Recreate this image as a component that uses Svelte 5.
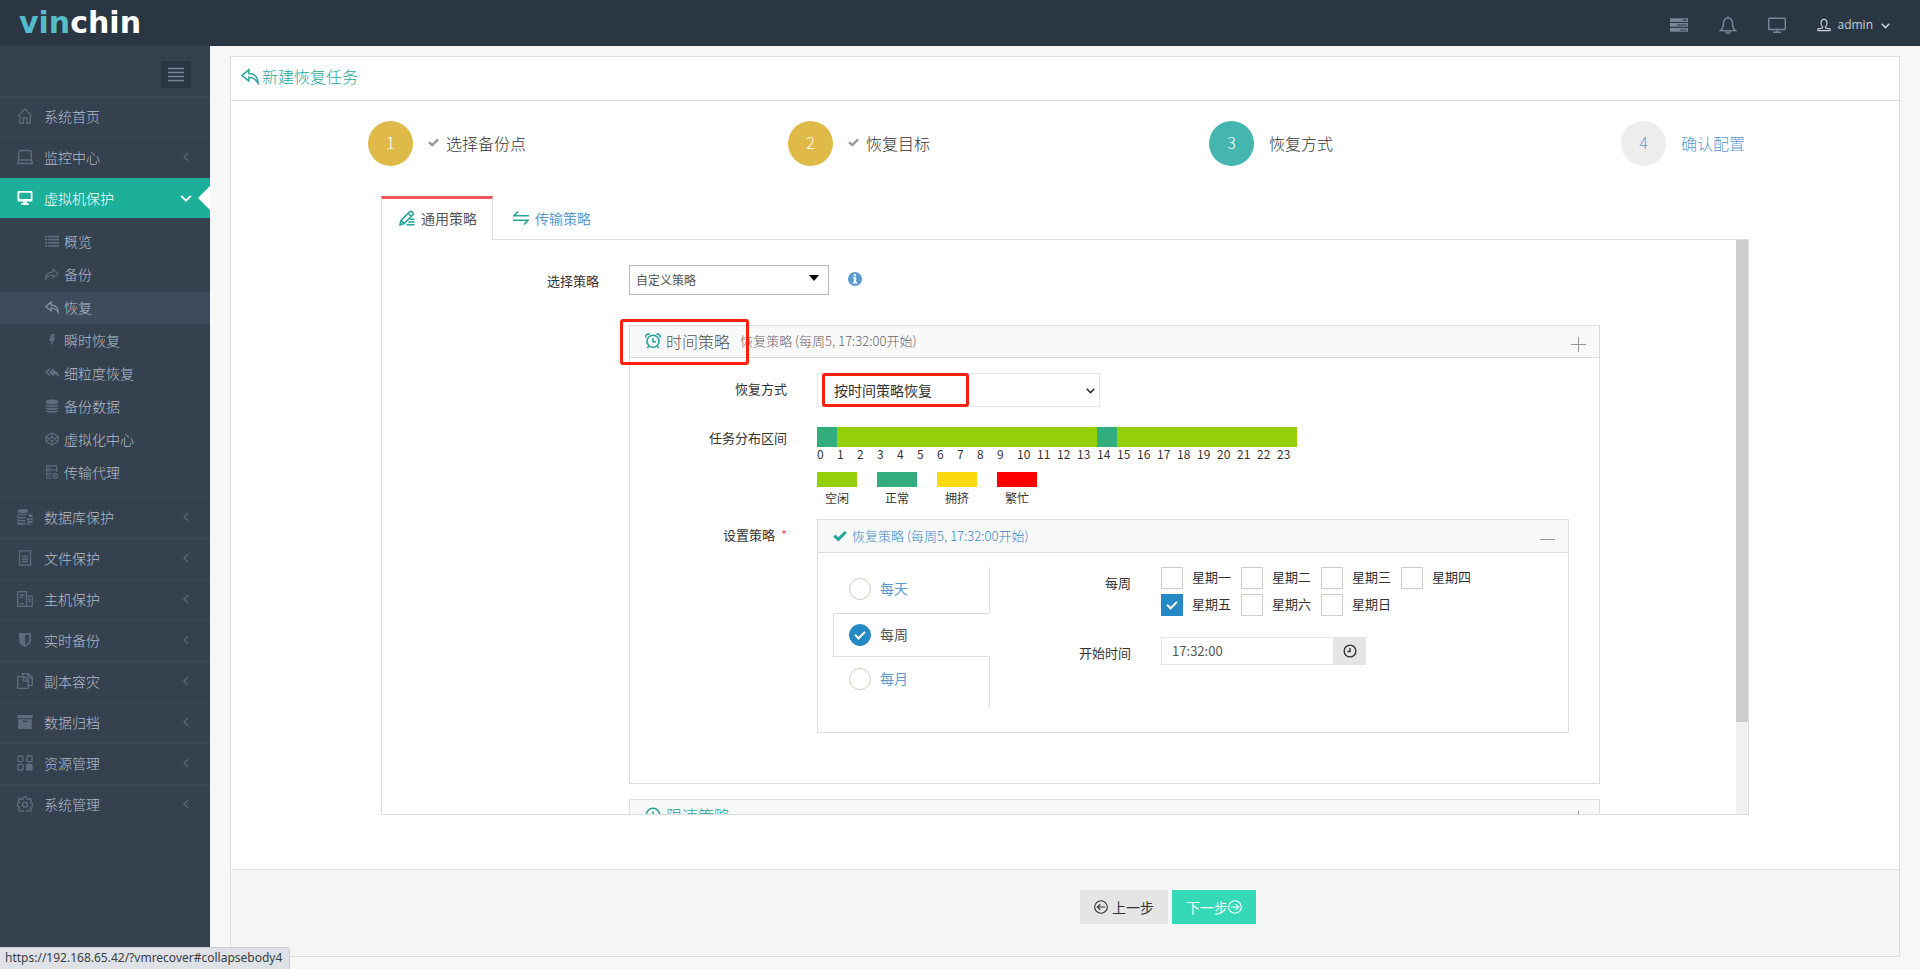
<script lang="ts">
  type IconDef = { d?: string; f?: string };

  // d is stroked, f is filled, both on a 16x16 grid
  const icons: Record<string, IconDef> = {
    home: { d: 'M.8 8.4 8 .9l7.200 7.500M2.900 8.300v7.100h3.300V10h3.600v5.400h3.300V8.300' },
    laptop: { d: 'M3.200 1.500h9.600a1.500 1.500 0 0 1 1.500 1.500v8H1.700V3a1.500 1.500 0 0 1 1.500-1.500zM1.700 11 .7 13.500v1h14.600v-1L14.300 11' },
    desktop: {
      f: 'M.5 2.200Q.5 1 1.700 1h12.600q1.200 0 1.200 1.200v8.100q0 1.200-1.200 1.200H9.800v1.800h2V15H4.200v-1.700h2v-1.800H1.700q-1.200 0-1.200-1.200zM2.300 2.700v6.400h11.400V2.700z',
    },
    list: { f: 'M0 2h2.500v2H0zM3.700 2H16v2H3.700zM0 5.500h2.500v2H0zM3.700 5.500H16v2H3.700zM0 9h2.500v2H0zM3.700 9H16v2H3.700zM0 12.500h2.500v2H0zM3.700 12.500H16v2H3.700z' },
    share: { d: 'M.8 13.500C1 8.500 4 5.800 9 5.500V2.300l6.200 5.200L9 12.300V9.200C5.500 9 3 10.200.8 13.500z' },
    reply: { d: 'M15.200 14.300C15 9 12 6 7 5.800V2.300L.8 7.500 7 12.400V9.200c3.500 0 6 1.500 8.200 5.100z' },
    bolt: { f: 'M7 1h4.300L9.300 5.500h3L6 15.500l1.600-6.400H4.500z' },
    replyAll: { f: 'M5.500 2v2.200L2.700 7l2.800 2.800V12L0 7zM10 2v3c4 .4 6 3 6 8.500-1.500-2.800-3-4-6-4.200V12L4.500 7z' },
    database: {
      f: 'M8 .5c4 0 7 1 7 2.200v1.200c0 1.200-3 2.200-7 2.200s-7-1-7-2.200V2.700C1 1.500 4 .5 8 .5zM1 5.600c1.500 1.200 4 1.600 7 1.600s5.500-.4 7-1.600v1.600c0 1.200-3 2.200-7 2.200s-7-1-7-2.200zM1 8.900c1.500 1.200 4 1.600 7 1.600s5.500-.4 7-1.600v1.600c0 1.200-3 2.200-7 2.200s-7-1-7-2.200zM1 12.200c1.500 1.200 4 1.600 7 1.600s5.500-.4 7-1.600v1.400c0 1.200-3 2.200-7 2.200s-7-1-7-2.200z',
    },
    codepen: { d: 'M8 1 15 5.200v5.600L8 15 1 10.800V5.200zM8 1v4.400M8 10.600V15M1 5.200l7 5.400 7-5.400M1 10.800l7-5.400 7 5.400' },
    agent: { d: 'M7 14.800H2V1h11.500v7M2 5.500h11.500M2 10h6M4 3.300h2M4 7.700h2M4 12.300h2M9 11.300l1.600-1.500h2.300l1.600 1.500v2.200L12.900 15h-2.300L9 13.500zM10.800 12.400h2' },
    dbPair: {
      f: 'M5.800 0c3 0 5.300.9 5.300 2s-2.300 2.200-5.300 2.200S.5 3.200.5 2.100 2.800 0 5.800 0zM.5 3.700c1.500 1.300 3.500 1.500 5.300 1.500s3.800-.2 5.300-1.500v.9c-1 1.400-3 2-5.300 2S.5 5.900.5 4.700zM0 6.500c1.500 1.300 4 1.800 6.500 1.700l2.300-.3v1.200c-4 1.200-8.800.3-8.800-1.200zM0 9.700c2 1.300 5 1.600 8.800 1.200v1.400C4.500 13 0 12.500 0 11zM0 12.800c2 1.200 5 1.600 8.800 1.200v1.500C4.500 16.300 0 15.800 0 14.200zM12.500 5c2 .2 3.500.8 3.500 1.600s-2 1.700-4 1.700V5zM10 9.300c2.500.4 4.700 0 6-.9v1.300c0 1-3 2-6 1.600zM10 12.200c2.500.3 4.700 0 6-.9v1.200c0 1-3 1.900-6 1.600zM10 14.900c2.500.2 4.700 0 6-.8-.2 1.200-3 2-6 1.800z',
    },
    file: { d: 'M2.500.8h11v14.400h-11zM5 6.500h6M5 9h6M5 11.500h6' },
    servers: { d: 'M9.500 15.300H.7V.7h8.800V4M3 4h4.500M3 6.500h3M3 12.800h4M9.500 4v11.300h5.800V5.200H9.500M11 8h2.500M11 10.300h2.500' },
    shield: { f: 'M2 1h12v6.500c0 3.500-2.500 5.700-6 7.500-3.500-1.800-6-4-6-7.500zM8 2.700v10.400c2.800-1.500 4.300-3.200 4.300-5.600V2.700z' },
    copy: { d: 'M5.500 4V.7h6L15.300 4.500v7.800h-4M.7 3.700h6.500l4 4v7.600H.7zM6.500 3.700v4.500h4.500M10.800.9v3.900h4.400' },
    archive: { f: 'M.3 1h15.400v3.200H.3zM1.200 5.200h13.600V15H1.200zM5.700 6.600v1.300h4.600V6.600z' },
    grid: {
      d: 'M1.900 1H5a1 1 0 0 1 1 1v3.600a1 1 0 0 1-1 1H1.900a1 1 0 0 1-1-1V2a1 1 0 0 1 1-1zM11 1h3.100a1 1 0 0 1 1 1v3.600a1 1 0 0 1-1 1H11a1 1 0 0 1-1-1V2a1 1 0 0 1 1-1zM1.900 9.300H5a1 1 0 0 1 1 1V14a1 1 0 0 1-1 1H1.900a1 1 0 0 1-1-1v-3.700a1 1 0 0 1 1-1z',
      f: 'M10.500 8.700h3.700q1.500 0 1.500 1.500v3.900q0 1.500-1.500 1.500h-3.700q-1.500 0-1.500-1.500v-3.900q0-1.500 1.500-1.500z',
    },
    gear: {
      d: 'M6.800.8h2.400l.5 2 1.300.6 1.900-1.100 1.700 1.700-1.100 1.900.6 1.300 1.600.5v2.400l-1.600.5-.6 1.300 1.100 1.900-1.700 1.700-1.900-1.100-1.300.6-.5 1.600H6.800l-.5-1.600-1.300-.6-1.900 1.100-1.700-1.700 1.100-1.900-.6-1.300L.4 10.100V7.700l1.200-.5.6-1.300L1.400 4l1.700-1.700L5 3.400l1.300-.6zM8 6.200a2.500 2.500 0 1 0 0 5 2.500 2.500 0 0 0 0-5z',
    },
    left: { d: 'M10.500 3.500 5.500 8l5 4.500' },
    down: { d: 'M2.500 5.500 8 11l5.500-5.500' },
    tasks: { f: 'M0 2h16v3.300H0zM0 6.300h16v3.300H0zM0 10.700h16V14H0zM11 3.200v1h4v-1zM6 7.500v1h9v-1zM9 11.900v1h6v-1z' },
    bell: { d: 'M8 .5v1.300M1.300 13h13.400c-2-1.500-2.700-3-2.700-6.500 0-3-1.500-4.700-4-4.700S4 3.500 4 6.500c0 3.500-.7 5-2.700 6.500zM6.200 13.300c0 2.700 3.600 2.700 3.600 0' },
    screen: { d: 'M1.300 2h13.400q.7 0 .7.7v8.600q0 .7-.7.700H1.300q-.7 0-.7-.7V2.700q0-.7.7-.7zM8 12v2.200M4.500 14.400h7' },
    user: { d: 'M6.300 10.200C4 8 3.500 1.500 8 1.500s4 6.500 1.700 8.700v1.300l5.300 1v2H1v-2l5.300-1z' },
    edit: { d: 'M1 14.800 2 10.500 10.300 2q1.300-1.300 2.600-.2l.7.700q1.200 1.200 0 2.500l-8.400 8.600zM2.200 10.700l3 2.800M9 3.300l3.300 3.200M11 9.300h4.500M9.300 12h6.200M7.500 14.800h8' },
    exchange: { d: 'M5 1.500 1 5.700h15M0 10.300h15L11 14.500' },
    clockBell: { d: 'M8 2.300a6 6 0 1 0 0 12 6 6 0 0 0 0-12zM8 5v3.800h3M3.800 13 2.300 15M12.200 13l1.500 2M.8 4.500C.5 2 2.500.6 4.700 1.300M15.200 4.500c.3-2.500-1.700-3.900-3.900-3.200' },
    clock: { d: 'M8 1.300a6.700 6.700 0 1 0 0 13.400A6.700 6.700 0 0 0 8 1.300zM8 4.500V8.500H5' },
    check: { f: 'M.3 8.800 2.600 6.300 6 9.300 13.400 2.200 15.800 4.700 6.200 14.300z' },
    plus: { d: 'M8.500 1v15M1 8.500h15' },
    minus: { d: 'M1 8.500h15' },
    info: { f: 'M8 0a8 8 0 1 1 0 16A8 8 0 0 1 8 0zM6.500 2.500v2.300h2.700V2.500zM5.500 6v1.500h1.200v4H5.500V13h5v-1.500H9.300V6z' },
    circleLeft: { d: 'M8 .8a7.200 7.200 0 1 0 0 14.400A7.200 7.200 0 0 0 8 .8zM12.500 8H4M7.200 4.700 3.800 8l3.400 3.300' },
    circleRight: { d: 'M8 .8a7.200 7.200 0 1 0 0 14.400A7.200 7.200 0 0 0 8 .8zM3.500 8H12M8.800 4.700 12.200 8l-3.400 3.300' },
    lines: { d: 'M0 1.500h16M0 5.500h16M0 9.500h16M0 13.500h16' },
  };

  const topMenu = [
    { icon: 'home', label: '系统首页', arrow: false },
    { icon: 'laptop', label: '监控中心', arrow: true },
  ];
  const subMenu = [
    { icon: 'list', label: '概览' },
    { icon: 'share', label: '备份' },
    { icon: 'reply', label: '恢复' },
    { icon: 'bolt', label: '瞬时恢复' },
    { icon: 'replyAll', label: '细粒度恢复' },
    { icon: 'database', label: '备份数据' },
    { icon: 'codepen', label: '虚拟化中心' },
    { icon: 'agent', label: '传输代理' },
  ];
  const bottomMenu = [
    { icon: 'dbPair', label: '数据库保护' },
    { icon: 'file', label: '文件保护' },
    { icon: 'servers', label: '主机保护' },
    { icon: 'shield', label: '实时备份' },
    { icon: 'copy', label: '副本容灾' },
    { icon: 'archive', label: '数据归档' },
    { icon: 'grid', label: '资源管理' },
    { icon: 'gear', label: '系统管理' },
  ];
  const steps = [
    { label: '选择备份点', state: 'done' },
    { label: '恢复目标', state: 'done' },
    { label: '恢复方式', state: 'current' },
    { label: '确认配置', state: 'todo' },
  ];
  const legend = [
    { level: 'idle', label: '空闲' },
    { level: 'normal', label: '正常' },
    { level: 'crowded', label: '拥挤' },
    { level: 'busy', label: '繁忙' },
  ];

  const hours = Array.from({ length: 24 }, (_, i) => i);
  const normalHours = [0, 14];

  const cycles = ['每天', '每周', '每月'];
  let cycle = $state('每周');

  const weekdays = ['星期一', '星期二', '星期三', '星期四', '星期五', '星期六', '星期日'];
  let checkedDays = $state(['星期五']);
  let startTime = $state('17:32:00');

  const summary = '恢复策略 (每周5, 17:32:00开始)';
</script>

{#snippet icon(name: string, cls = '')}
  <svg class="icon {cls}" viewBox="0 0 16 16" aria-hidden="true">
    {#if icons[name].d}<path class="stroke" d={icons[name].d} />{/if}
    {#if icons[name].f}<path class="fill" d={icons[name].f} />{/if}
  </svg>
{/snippet}

<header class="topbar">
  <a class="logo" href="#home"><span>vin</span>chin</a>
  <nav class="top-nav">
    <button type="button" aria-label="任务">{@render icon('tasks', 'lg')}</button>
    <button type="button" aria-label="告警">{@render icon('bell', 'lg')}</button>
    <button type="button" aria-label="大屏">{@render icon('screen', 'lg')}</button>
    <button type="button" class="account">
      {@render icon('user', 'sm')}<span>admin</span>{@render icon('down', 'xs bold')}
    </button>
  </nav>
</header>

<div class="layout">
  <aside class="sidebar">
    <div class="toggle-row">
      <button type="button" class="toggler" aria-label="折叠菜单">{@render icon('lines')}</button>
    </div>
    <ul class="menu">
      {#each topMenu as item}
        <li>
          <a href="#{item.icon}">
            {@render icon(item.icon)}<span>{item.label}</span>
            {#if item.arrow}{@render icon('left', 'arrow')}{/if}
          </a>
        </li>
      {/each}
      <li class="active">
        <a href="#vm">{@render icon('desktop')}<span>虚拟机保护</span>{@render icon('down', 'arrow bold')}</a>
        <ul class="sub-menu">
          {#each subMenu as item}
            <li>
              <a href="#{item.icon}" class:selected={item.label === '恢复'}>
                {@render icon(item.icon, 'sm')}<span>{item.label}</span>
              </a>
            </li>
          {/each}
        </ul>
      </li>
      {#each bottomMenu as item}
        <li>
          <a href="#{item.icon}">
            {@render icon(item.icon)}<span>{item.label}</span>{@render icon('left', 'arrow')}
          </a>
        </li>
      {/each}
    </ul>
  </aside>

  <main>
    <section class="portlet">
      <h1>{@render icon('reply', 'lg')}新建恢复任务</h1>

      <div class="portlet-body">
        <ol class="steps">
          {#each steps as step, i}
            <li class={step.state}>
              <span class="number">{i + 1}</span>
              <span class="desc">
                {#if step.state === 'done'}{@render icon('check', 'xs')}{/if}{step.label}
              </span>
            </li>
          {/each}
        </ol>

        <div class="tabbable">
          <nav class="tabs">
            <a href="#general" class="on">{@render icon('edit')}通用策略</a>
            <a href="#transfer">{@render icon('exchange')}传输策略</a>
          </nav>

          <div class="pane">
            <div class="scroll">
              <div class="row">
                <label class="name" for="policy">选择策略</label>
                <div class="inline">
                  <div class="select policy">
                    <select id="policy"><option>自定义策略</option></select>
                    <i class="caret"></i>
                  </div>
                  {@render icon('info', 'sm blue')}
                </div>
              </div>

              <div class="row">
                <span></span>
                <div class="panels">
                  <section class="panel">
                    <header class="panel-head">
                      <h2>{@render icon('clockBell')}时间策略</h2>
                      <span class="summary">{summary}</span>
                      <button type="button" aria-label="展开">{@render icon('plus')}</button>
                      <div class="mark mark-title"></div>
                    </header>
                    <div class="panel-body">
                      <div class="field">
                        <label class="name" for="mode">恢复方式</label>
                        <div class="select mode">
                          <select id="mode"><option>按时间策略恢复</option></select>
                          {@render icon('down', 'xs bold')}
                          <div class="mark mark-mode"></div>
                        </div>
                      </div>

                      <div class="field">
                        <span class="name short">任务分布区间</span>
                        <div>
                          <div class="hours">
                            {#each hours as hour}
                              <div class="hour">
                                <i class={normalHours.includes(hour) ? 'normal' : 'idle'}></i>
                                <span>{hour}</span>
                              </div>
                            {/each}
                          </div>
                          <div class="legend">
                            {#each legend as item}
                              <div><i class={item.level}></i><span>{item.label}</span></div>
                            {/each}
                          </div>
                        </div>
                      </div>

                      <div class="field last">
                        <span class="name">设置策略<em>*</em></span>
                        <section class="panel">
                          <header class="panel-head inner">
                            <a href="#collapsebody4">{@render icon('check', 'sm')}{summary}</a>
                            <button type="button" aria-label="收起">{@render icon('minus')}</button>
                          </header>
                          <div class="schedule">
                            <div class="cycles">
                              {#each cycles as item}
                                <label class:on={cycle === item}>
                                  <input type="radio" name="cycle" value={item} bind:group={cycle} />
                                  <span>{item}</span>
                                </label>
                              {/each}
                              <div class="rest"></div>
                            </div>
                            <div class="settings">
                              <span class="name">每周</span>
                              <div class="days">
                                {#each weekdays as day}
                                  <label>
                                    <input type="checkbox" value={day} bind:group={checkedDays} />
                                    <span>{day}</span>
                                  </label>
                                {/each}
                              </div>
                              <label class="name" for="start">开始时间</label>
                              <div class="time">
                                <input id="start" type="text" bind:value={startTime} />
                                <button type="button" aria-label="选择时间">{@render icon('clock', 'sm')}</button>
                              </div>
                            </div>
                          </div>
                        </section>
                      </div>
                    </div>
                  </section>

                  <section class="panel">
                    <header class="panel-head">
                      <h2 class="link">{@render icon('clock')}限速策略</h2>
                      <button type="button" aria-label="展开">{@render icon('plus')}</button>
                    </header>
                  </section>
                </div>
              </div>
            </div>
            <div class="scrollbar"><div class="thumb"></div></div>
          </div>
        </div>
      </div>

      <footer class="actions">
        <button type="button" class="prev">{@render icon('circleLeft', 'sm')}<span>上一步</span></button>
        <button type="button" class="next"><span>下一步</span>{@render icon('circleRight', 'sm')}</button>
      </footer>
    </section>
  </main>
</div>

<div class="link-status">https://192.168.65.42/?vmrecover#collapsebody4</div>

<style>
  :global(body) {
    margin: 0;
    background: #f7f7f7;
  }
  :global(#app) {
    min-height: 100vh;
    display: flex;
    flex-direction: column;
    font: 13px/20px 'Noto Sans CJK SC', 'Open Sans', sans-serif;
    color: #333;
  }
  * {
    box-sizing: border-box;
  }
  ul,
  ol,
  h1,
  h2 {
    margin: 0;
    padding: 0;
    list-style: none;
    font-weight: 300;
  }
  a {
    color: #5b9bd1;
    text-decoration: none;
  }
  button,
  input,
  select {
    margin: 0;
    padding: 0;
    border: 0;
    background: none;
    font: inherit;
    color: inherit;
  }

  .icon {
    width: 16px;
    height: 16px;
    flex-shrink: 0;
    display: block;
  }
  .icon.lg {
    width: 18px;
    height: 18px;
  }
  .icon.sm {
    width: 14px;
    height: 14px;
  }
  .icon.xs {
    width: 11px;
    height: 11px;
  }
  .icon.blue {
    color: #5b9bd1;
  }
  .stroke {
    fill: none;
    stroke: currentColor;
    stroke-width: 1.3;
  }
  .bold .stroke {
    stroke-width: 2.2;
  }
  .fill {
    fill: currentColor;
    fill-rule: evenodd;
  }

  .topbar {
    height: 46px;
    padding: 0 29px 0 19px;
    display: flex;
    align-items: center;
    justify-content: space-between;
    background: #2b3643;
  }
  .logo {
    height: 44px;
    font: bold 30px/44px 'DejaVu Sans', sans-serif;
    color: #fff;
  }
  .logo span {
    color: #54bccb;
  }
  .top-nav {
    display: flex;
    align-items: center;
    gap: 31px;
    padding-top: 4px;
    color: #79869a;
  }
  .account {
    display: flex;
    align-items: center;
    gap: 6px;
    color: #c6cfda;
    font: 12px/18px 'Open Sans', sans-serif;
  }
  .account span {
    margin-right: 1px;
  }

  .layout {
    flex: 1;
    display: flex;
  }
  .sidebar {
    width: 210px;
    flex-shrink: 0;
    background: #364150;
  }
  .toggle-row {
    height: 50px;
    padding: 15px 19px 0;
    display: flex;
    justify-content: flex-end;
  }
  .toggler {
    width: 30px;
    height: 27px;
    display: grid;
    place-items: center;
    background: #2b3643;
    color: #79869a;
  }
  .menu > li > a {
    position: relative;
    height: 41px;
    padding: 0 17px 2px;
    display: flex;
    align-items: center;
    gap: 11px;
    border-top: 1px solid #3d4957;
    font-size: 14px;
    color: #b4bcc8;
  }
  .menu a .icon {
    color: #606c7d;
  }
  .menu a .arrow {
    width: 14px;
    height: 14px;
    margin-left: auto;
  }
  .menu > .active > a {
    height: 40px;
    background: #1caf9a;
    border-color: #1caf9a;
    color: #fff;
  }
  .menu > .active > a .icon {
    color: #fff;
  }
  .menu > .active > a::after {
    content: '';
    position: absolute;
    right: 0;
    top: 7px;
    border: 12px solid transparent;
    border-left: 0;
    border-right-color: #fff;
  }
  .sub-menu {
    padding: 8px 0 7px;
  }
  .sub-menu a {
    height: 32px;
    margin-bottom: 1px;
    padding: 0 0 2px 45px;
    display: flex;
    align-items: center;
    gap: 5px;
    font-size: 14px;
    color: #b4bcc8;
  }
  .sub-menu .selected {
    background: #3e4b5c;
  }
  .menu .selected .icon {
    color: #8e9bae;
  }

  main {
    flex: 1;
    min-width: 0;
    padding: 10px 20px 12px;
    display: flex;
  }
  .portlet {
    flex: 1;
    min-width: 0;
    display: flex;
    flex-direction: column;
    border: 1px solid #ddd;
    background: #fff;
  }
  h1 {
    height: 44px;
    padding: 0 10px 5px;
    display: flex;
    align-items: center;
    gap: 3px;
    border-bottom: 1px solid #ddd;
    font-size: 16px;
    color: #26a69a;
  }
  .portlet-body {
    flex: 1;
    padding: 20px 0;
  }
  .steps {
    padding: 0 10px;
    display: grid;
    grid-template-columns: repeat(4, 1fr);
  }
  .steps li {
    display: flex;
    align-items: center;
    justify-content: center;
    gap: 15px;
    font-size: 16px;
    font-weight: 300;
  }
  .number {
    width: 45px;
    height: 45px;
    border-radius: 50%;
    line-height: 43px;
    text-align: center;
    background: #ededed;
  }
  .desc {
    padding-bottom: 2px;
    display: flex;
    align-items: center;
    gap: 7px;
  }
  .desc .icon {
    color: #999;
  }
  .done .number {
    background: #dfba49;
    color: #fff;
  }
  .current .number {
    background: #45b6af;
    color: #fff;
  }
  .todo {
    color: #5b9bd1;
  }

  .tabbable {
    margin: 30px 9% 0;
  }
  .tabs {
    display: flex;
    gap: 2px;
  }
  .tabs a {
    height: 44px;
    margin-bottom: -1px;
    padding: 0 15px 3px 17px;
    display: flex;
    align-items: center;
    gap: 6px;
    border: 1px solid transparent;
    border-top-width: 3px;
    border-bottom: 0;
    font-size: 14px;
  }
  .tabs .on {
    z-index: 1;
    border-color: #f3565d #ddd;
    background: #fff;
    color: #555;
  }
  .tabs .icon {
    color: #26a69a;
  }
  .pane {
    height: 576px;
    display: flex;
    border: 1px solid #ddd;
  }
  .scroll {
    flex: 1;
    min-width: 0;
    overflow: hidden;
    padding: 25px 136px 0 0;
  }
  .scrollbar {
    width: 12px;
    background: #f1f1f1;
  }
  .thumb {
    height: 84%;
    background: #cdcdcd;
  }

  .row {
    display: grid;
    grid-template-columns: 217px 1fr;
    gap: 30px;
    margin-bottom: 28px;
  }
  .name {
    line-height: 32px;
    text-align: right;
  }
  .name.short {
    line-height: 21px;
  }
  .name em {
    margin-left: 6px;
    font-style: normal;
    color: #f3565d;
  }
  .inline {
    display: flex;
    gap: 19px;
    height: 32px;
  }
  .inline > .icon {
    margin-top: 7px;
  }
  .select {
    position: relative;
  }
  .select select {
    width: 100%;
    height: 100%;
    appearance: none;
  }
  .policy {
    width: 200px;
    height: 30px;
  }
  .policy select {
    padding: 0 6px;
    border: 1px solid #bbb;
    font-size: 12px;
    color: #555;
  }
  .caret {
    position: absolute;
    right: 10px;
    top: 10px;
    border: 5px solid transparent;
    border-top: 6px solid #000;
    border-bottom: 0;
  }
  .mode {
    width: 283px;
    height: 34px;
  }
  .mode select {
    padding: 0 16px 1px;
    border: 1px solid #e5e5e5;
    font-size: 14px;
  }
  .mode .icon {
    position: absolute;
    right: 4px;
    top: 12px;
  }

  .mark {
    position: absolute;
    z-index: 2;
    border: 3px solid #ff2010;
    border-radius: 3px;
    pointer-events: none;
  }
  .mark-title {
    left: -10px;
    top: -7px;
    width: 129px;
    height: 46px;
  }
  .mark-mode {
    left: 5px;
    top: 0;
    width: 147px;
    height: 34px;
  }

  .panels {
    display: grid;
    gap: 15px;
  }
  .panel {
    min-width: 0;
    border: 1px solid #ddd;
  }
  .panel-head {
    position: relative;
    height: 32px;
    padding: 0 13px 2px 15px;
    display: flex;
    align-items: center;
    gap: 10px;
    border-bottom: 1px solid #ddd;
    background: #f9f9f9;
  }
  .panel-head.inner {
    height: 33px;
    padding-bottom: 0;
  }
  .panel-head h2,
  .panel-head a {
    display: flex;
    align-items: center;
    gap: 5px;
  }
  .panel-head h2 {
    font-size: 16px;
    color: #555;
  }
  .panel-head h2.link,
  .panel-head .icon {
    color: #26a69a;
  }
  .panel-head a {
    font-weight: 300;
    color: #3a86c8;
  }
  .panel-head button {
    margin-left: auto;
    padding-top: 6px;
  }
  .panel-head button .stroke {
    stroke-width: 1;
  }
  .panel-head button .icon {
    color: #999;
  }
  .summary {
    font-weight: 300;
    color: #666;
  }
  .panel-body {
    padding: 15px 30px 50px 0;
  }
  .field {
    display: grid;
    grid-template-columns: 157px 1fr;
    gap: 30px;
    margin-bottom: 20px;
  }
  .field.last {
    margin: -10px 0 0;
  }
  .hours {
    display: flex;
    height: 45px;
    font-size: 12px;
  }
  .hour {
    width: 20px;
    line-height: 13px;
  }
  .hour i {
    display: block;
    height: 20px;
  }
  .idle {
    background: #94cf07;
  }
  .normal {
    background: #32ae7e;
  }
  .crowded {
    background: #fad90f;
  }
  .busy {
    background: #f00;
  }
  .legend {
    display: flex;
    gap: 20px;
    font-size: 12px;
    line-height: 22px;
    text-align: center;
  }
  .legend div {
    width: 40px;
  }
  .legend i {
    display: block;
    height: 15px;
  }

  .schedule {
    padding: 14px 15px 26px;
    display: flex;
  }
  .cycles {
    width: 157px;
    display: flex;
    flex-direction: column;
  }
  .cycles label {
    padding: 11px 16px 13px;
    display: flex;
    align-items: center;
    gap: 9px;
    border-right: 1px solid #ddd;
    font-size: 14px;
    line-height: 20px;
    color: #5b9bd1;
  }
  .cycles .on {
    padding: 10px 15px;
    border: 1px solid #ddd;
    border-right-color: transparent;
    color: #555;
  }
  .cycles span,
  .days span {
    padding-bottom: 2px;
  }
  .rest {
    height: 3px;
    border-right: 1px solid #ddd;
  }
  input[type='radio'],
  input[type='checkbox'] {
    width: 22px;
    height: 22px;
    flex-shrink: 0;
    display: grid;
    place-items: center;
    appearance: none;
    border: 1px solid #d0cdc7;
    background: #fff;
  }
  input[type='radio'] {
    border-radius: 50%;
  }
  input:checked {
    border-color: #2489c5;
    background: #2489c5;
  }
  input:checked::after {
    content: '';
    width: 4px;
    height: 8px;
    margin-bottom: 3px;
    border: solid #fff;
    border-width: 0 2px 2px 0;
    transform: rotate(45deg);
  }
  .settings {
    flex: 1;
    display: grid;
    grid-template-columns: 141px 1fr;
    grid-template-rows: 49px 34px;
    gap: 21px 30px;
  }
  .days {
    display: grid;
    grid-template-columns: repeat(4, 80px);
    gap: 5px 0;
  }
  .days label {
    height: 22px;
    display: flex;
    align-items: center;
    gap: 9px;
  }
  .time {
    width: 205px;
    height: 28px;
    display: flex;
  }
  .time input {
    flex: 1;
    min-width: 0;
    padding: 0 10px;
    border: 1px solid #e5e5e5;
    color: #555;
  }
  .time button {
    width: 32px;
    display: grid;
    place-items: center;
    background: #e5e5e5;
  }
  .time .stroke,
  .tabs .stroke,
  .panel-head h2 .stroke {
    stroke-width: 1.6;
  }

  .actions {
    height: 87px;
    padding: 20px 10px 0 calc(50% + 15px);
    display: flex;
    align-items: flex-start;
    gap: 4px;
    border-top: 1px solid #e5e5e5;
    background: #f5f5f5;
  }
  .actions button {
    height: 34px;
    padding: 0 14px 1px;
    display: flex;
    align-items: center;
    font-size: 14px;
  }
  .prev {
    gap: 4px;
    background: #e5e5e5;
  }
  .actions .next {
    background: #35d8b7;
    color: #fff;
  }

  .link-status {
    position: fixed;
    left: 0;
    bottom: 0;
    height: 22px;
    padding: 0 7px 0 5px;
    border: solid #c8cbd0;
    border-width: 1px 1px 0 0;
    border-top-right-radius: 4px;
    background: #dee1e6;
    font: 12px/20px 'Noto Sans', 'Open Sans', sans-serif;
    color: #3c4043;
    z-index: 5;
  }
</style>
